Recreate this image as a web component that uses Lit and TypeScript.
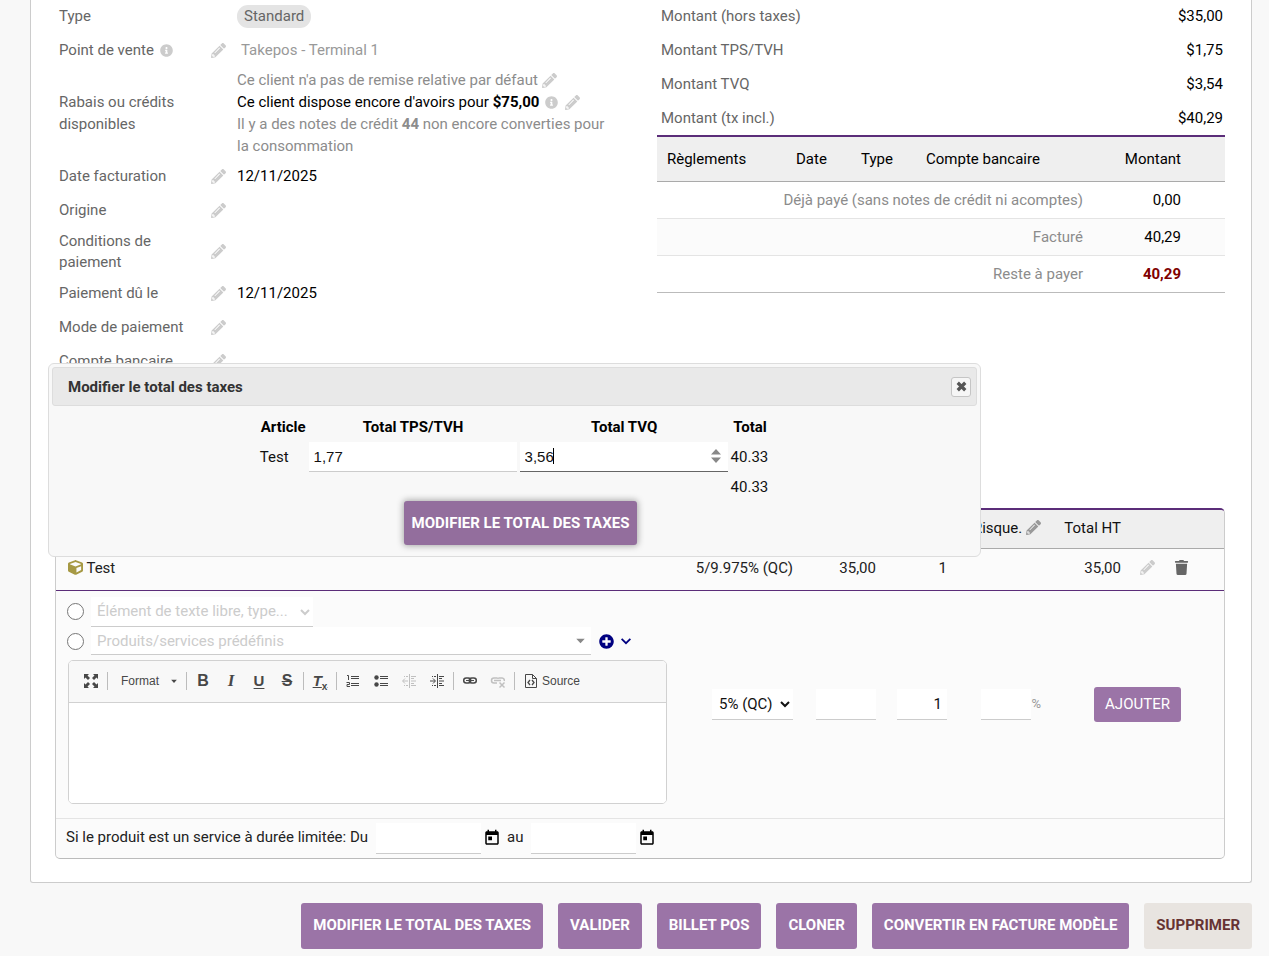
import { LitElement, html, svg, css, nothing } from "lit";
import { customElement, property } from "lit/decorators.js";

type Glyph = { box: string; body: unknown };

const stroke = (d: string, w = 1) =>
  svg`<path d=${d} fill="none" stroke="currentColor" stroke-width=${w} />`;
const fill = (d: string) => svg`<path d=${d} fill="currentColor" fill-rule="evenodd" />`;

const GLYPHS: Record<string, Glyph> = {
  pencil: {
    box: "0 0 512 512",
    body: fill(
      "M497.9 142.1l-46.1 46.1c-4.7 4.7-12.3 4.7-17 0l-111-111c-4.7-4.7-4.7-12.3 0-17l46.1-46.1c18.7-18.7 49.1-18.7 67.9 0l60.1 60.1c18.8 18.7 18.8 49.1 0 67.9zM284.2 99.8L21.6 362.4.4 483.9c-2.9 16.4 11.4 30.6 27.8 27.8l121.5-21.3 262.6-262.6c4.7-4.7 4.7-12.3 0-17l-111-111c-4.8-4.7-12.4-4.7-17.1 0zM124.1 339.9c-5.5-5.5-5.5-14.3 0-19.8l154-154c5.5-5.5 14.3-5.5 19.8 0s5.5 14.3 0 19.8l-154 154c-5.5 5.5-14.3 5.5-19.8 0zM88 424h48v36.3l-64.5 11.3-31.1-31.1L51.7 376H88v48z"
    ),
  },
  info: {
    box: "0 0 512 512",
    body: fill(
      "M256 8C119.043 8 8 119.083 8 256c0 136.997 111.043 248 248 248s248-111.003 248-248C504 119.083 392.957 8 256 8zm0 110c23.196 0 42 18.804 42 42s-18.804 42-42 42-42-18.804-42-42 18.804-42 42-42zm56 254c0 6.627-5.373 12-12 12h-88c-6.627 0-12-5.373-12-12v-24c0-6.627 5.373-12 12-12h12v-64h-12c-6.627 0-12-5.373-12-12v-24c0-6.627 5.373-12 12-12h64c6.627 0 12 5.373 12 12v100h12c6.627 0 12 5.373 12 12v24z"
    ),
  },
  trash: {
    box: "-32 0 512 512",
    body: fill(
      "M432 32H312l-9.4-18.7A24 24 0 0 0 281.1 0H166.8a23.72 23.72 0 0 0-21.4 13.3L136 32H16A16 16 0 0 0 0 48v32a16 16 0 0 0 16 16h416a16 16 0 0 0 16-16V48a16 16 0 0 0-16-16zM53.2 467a48 48 0 0 0 47.9 45h245.8a48 48 0 0 0 47.9-45L416 128H32z"
    ),
  },
  cube: {
    box: "0 0 512 512",
    body: fill(
      "M239.1 6.3l-208 78c-18.7 7-31.1 25-31.1 45v225.1c0 18.2 10.3 34.8 26.5 42.9l208 104c13.5 6.8 29.4 6.8 42.9 0l208-104c16.3-8.1 26.5-24.8 26.5-42.9V129.3c0-20-12.4-37.9-31.1-44.9l-208-78C262 2.2 250 2.2 239.1 6.3zM256 68.4l192 72v1.1l-192 78-192-78v-1.1l192-72zm32 356V275.5l160-65v133.9l-160 80z"
    ),
  },
  plus: {
    box: "0 0 512 512",
    body: fill(
      "M256 8C119 8 8 119 8 256s111 248 248 248 248-111 248-248S393 8 256 8zm144 276c0 6.6-5.4 12-12 12h-92v92c0 6.6-5.4 12-12 12h-56c-6.6 0-12-5.4-12-12v-92h-92c-6.6 0-12-5.4-12-12v-56c0-6.6 5.4-12 12-12h92v-92c0-6.6 5.4-12 12-12h56c6.6 0 12 5.4 12 12v92h92c6.6 0 12 5.4 12 12v56z"
    ),
  },
  calendar: {
    box: "0 0 24 24",
    body: fill(
      "M19 3h-1V1h-2v2H8V1H6v2H5c-1.11 0-1.99.9-1.99 2L3 19c0 1.1.89 2 2 2h14c1.1 0 2-.9 2-2V5c0-1.1-.9-2-2-2zm0 16H5V8h14v11zM7 10h5v5H7z"
    ),
  },
  chevron: { box: "0 0 16 16", body: stroke("M3 5.500L8 10.500l5-5", 2) },
  triangle: { box: "0 0 16 16", body: fill("M3.5 6h9L8 11z") },
  cross: { box: "0 0 16 16", body: stroke("M4 4l8 8M12 4l-8 8", 3.5) },
  spinner: { box: "0 0 16 16", body: fill("M3 6.500L8 1l5 5.500zM3 9.500h10L8 15z") },
  maximize: {
    box: "0 0 16 16",
    body: svg`${fill("M1 1h5L4.500 2.500 7 5 5 7 2.500 4.500 1 6zM15 1v5l-1.500-1.500L11 7 9 5l2.500-2.500L10 1zM1 15v-5l1.500 1.500L5 9l2 2-2.500 2.500L6 15zM15 15h-5l1.500-1.500L9 11l2-2 2.500 2.500L15 10z")}`,
  },
  ordered: {
    box: "0 0 16 16",
    body: svg`${stroke("M6 3.500h8M6 5.500h8M6 10.500h8M6 12.500h8")}${stroke("M2 2.500h1.500V7M1.500 9.500h3v2h-2.500v2h3")}`,
  },
  bullets: {
    box: "0 0 16 16",
    body: svg`${stroke("M7 3.500h8M7 5.500h8M7 10.500h8M7 12.500h8")}<circle cx="3.500" cy="4.500" r="2.200" fill="currentColor" /><circle cx="3.500" cy="11.500" r="2.200" fill="currentColor" />`,
  },
  outdent: {
    box: "0 0 16 16",
    body: svg`${stroke("M8.500 1v14M10 3.500h5M10 5.500h3M10 8h5M10 10.500h3M10 12.500h5")}${stroke("M3 3.500h1M5 3.500h2M3 12.500h1M5 12.500h2M2 8h5M4 5.500L1.500 8 4 10.500")}`,
  },
  indent: {
    box: "0 0 16 16",
    body: svg`${stroke("M8.500 1v14M10 3.500h5M10 5.500h3M10 8h5M10 10.500h3M10 12.500h5")}${stroke("M3 3.500h1M5 3.500h2M3 12.500h1M5 12.500h2M1 8h5M4 5.500L6.500 8 4 10.500")}`,
  },
  link: {
    box: "0 0 16 16",
    body: svg`<rect x="1.700" y="5" width="7" height="5" rx="2.500" fill="none" stroke="currentColor" stroke-width="1.500" /><rect x="7.300" y="5" width="7" height="5" rx="2.500" fill="none" stroke="currentColor" stroke-width="1.500" />${stroke("M4 7.500h8", 1.2)}`,
  },
  unlink: {
    box: "0 0 16 16",
    body: svg`${stroke("M8 5.500A2 2 0 0 0 6.500 5H4a2.500 2.500 0 0 0 0 5h3M8 5.500A2 2 0 0 1 9.500 5h2.700a2.300 2.300 0 0 1 2 3M4 7.500h7", 1.5)}${stroke("M9.500 9.500l5 5M14.500 9.500l-5 5", 1.5)}`,
  },
  source: {
    box: "0 0 16 16",
    body: svg`${stroke("M2.500 1.500h7l4 4v9h-11zM9.500 1.500v4h4")}${stroke("M7 7L5 9.500 7 12M9 7l2 2.500L9 12", 1.3)}`,
  },
};

@customElement("app-icon")
export class AppIcon extends LitElement {
  static styles = css`
    :host { display: inline-flex; width: 15px; height: 15px; vertical-align: middle; }
    svg { width: 100%; height: 100%; display: block; }
  `;
  @property() name = "pencil";
  render() {
    const g = GLYPHS[this.name];
    return html`<svg viewBox=${g.box} aria-hidden="true">${g.body}</svg>`;
  }
}

@customElement("invoice-summary")
export class InvoiceSummary extends LitElement {
  static styles = css`
    :host { display: grid; grid-template-columns: 1fr 1fr; column-gap: 34px; align-items: start; }
    a { color: inherit; text-decoration: none; }
    table { width: 100%; border-collapse: collapse; border-spacing: 0; table-layout: fixed; }
    td, th { font-weight: 400; padding: 0; text-align: left; }
    .facts tr { height: 34px; }
    .facts tr.first { height: 33px; }
    .facts tr.first th, .facts tr.first td { padding-bottom: 2px; }
    .facts tr.two-lines { height: 49px; line-height: 21px; }
    .facts tr.four-lines { height: 92px; }
    .facts th { color: #666; padding-left: 4px; }
    .facts td { padding-left: 7px; padding-right: 8px; }
    .facts td.action { padding: 0; text-align: center; }
    .facts td.amount { text-align: right; padding-right: 2px; }
    .label-col { width: 152px; }
    .action-col { width: 23px; }
    .edit { color: #ccc; }
    .edit app-icon { display: flex; margin: 0 auto; }
    td div .edit app-icon, .hint { display: inline-flex; margin-bottom: 2px; }
    .hint { width: 13px; height: 13px; color: #ccc; margin: 0 3px 2px 2px; }
    .badge { background: #e4e4e4; color: #666; border-radius: 11px; padding: 2px 7px 3px; }
    .muted { color: #8c8c8c; }
    .terminal { color: #999; padding-left: 4px; }
    .payments { border-top: 2px solid #5b2d79; border-bottom: 1px solid #bbb; }
    .payments thead tr { background: #efefef; height: 45px; border-bottom: 1px solid #aaa; }
    .payments th, .payments td { padding: 0 10px; white-space: nowrap; }
    .payments tbody tr { height: 37px; }
    .payments tbody tr + tr { border-top: 1px solid #e4e4e4; }
    .payments tbody tr:nth-child(2) { background: #fbfbfb; }
    .payments .num { text-align: right; }
    .payments tbody th { text-align: right; color: #8c8c8c; }
    .due { color: #800000; font-weight: 700; }
    .c-name { width: 129px; }
    .c-short { width: 65px; }
    .c-amount { width: 98px; }
    .c-end { width: 34px; }
  `;

  private edit(label: string) {
    return html`<a class="edit" href="#" aria-label=${"Modifier " + label}><app-icon name="pencil"></app-icon></a>`;
  }

  private row(label: string, value: unknown = nothing, cls = "") {
    return html`<tr class=${cls}>
      <th scope="row">${label}</th>
      <td class="action">${this.edit(label)}</td>
      <td>${value}</td>
    </tr>`;
  }

  render() {
    const amounts = [
      ["Montant (hors taxes)", "$35,00"],
      ["Montant TPS/TVH", "$1,75"],
      ["Montant TVQ", "$3,54"],
      ["Montant (tx incl.)", "$40,29"],
    ];
    return html`
      <table class="facts">
        <colgroup><col class="label-col" /><col class="action-col" /><col /></colgroup>
        <tbody>
          <tr class="first">
            <th scope="row">Type</th><td></td>
            <td><span class="badge">Standard</span></td>
          </tr>
          <tr>
            <th scope="row">Point de vente <app-icon class="hint" name="info"></app-icon></th>
            <td class="action">${this.edit("Point de vente")}</td>
            <td><span class="terminal">Takepos - Terminal 1</span></td>
          </tr>
          <tr class="four-lines">
            <th scope="row">Rabais ou crédits disponibles</th><td></td>
            <td>
              <div class="muted">Ce client n'a pas de remise relative par défaut ${this.edit("remise")}</div>
              <div>Ce client dispose encore d'avoirs pour <b>$75,00</b> <app-icon class="hint" name="info"></app-icon> ${this.edit("avoirs")}</div>
              <div class="muted">Il y a des notes de crédit <b>44</b> non encore converties pour la consommation</div>
            </td>
          </tr>
          ${this.row("Date facturation", "12/11/2025")}
          ${this.row("Origine")}
          ${this.row("Conditions de paiement", nothing, "two-lines")}
          ${this.row("Paiement dû le", "12/11/2025")}
          ${this.row("Mode de paiement")}
          ${this.row("Compte bancaire")}
        </tbody>
      </table>
      <div>
        <table class="facts">
          <tbody>
            ${amounts.map(
              ([k, v], i) => html`<tr class=${i ? "" : "first"}><th scope="row">${k}</th><td class="amount">${v}</td></tr>`
            )}
          </tbody>
        </table>
        <table class="payments">
          <colgroup>
            <col class="c-name" /><col class="c-short" /><col class="c-short" /><col /><col class="c-amount" /><col class="c-end" />
          </colgroup>
          <thead>
            <tr>
              <th scope="col">Règlements</th><th scope="col">Date</th><th scope="col">Type</th>
              <th scope="col">Compte bancaire</th><th scope="col" class="num">Montant</th><td></td>
            </tr>
          </thead>
          <tbody>
            <tr><th scope="row" colspan="4">Déjà payé (sans notes de crédit ni acomptes)</th><td class="num">0,00</td><td></td></tr>
            <tr><th scope="row" colspan="4">Facturé</th><td class="num">40,29</td><td></td></tr>
            <tr><th scope="row" colspan="4">Reste à payer</th><td class="num due">40,29</td><td></td></tr>
          </tbody>
        </table>
      </div>
    `;
  }
}

@customElement("rich-editor")
export class RichEditor extends LitElement {
  static styles = css`
    :host { display: block; border: 1px solid #d1d1d1; border-radius: 5px; overflow: hidden; background: #fff;
      font-family: "Liberation Sans", Arial, sans-serif; font-size: 12px; line-height: 16px; color: #484848; }
    .toolbar { display: flex; align-items: center; height: 41px; padding: 0 8px; background: #f8f8f8; border-bottom: 1px solid #d1d1d1; }
    button { display: inline-flex; align-items: center; justify-content: center; gap: 3px; width: 28px; height: 28px;
      padding: 0; border: 0; background: none; color: inherit; font: inherit; }
    button[disabled] { color: #c0c0c0; }
    button app-icon { width: 16px; height: 16px; }
    .sep { width: 1px; height: 18px; margin: 0 2px; background: #bcbcbc; }
    .combo { width: 74px; justify-content: flex-start; padding-left: 11px; gap: 10px; }
    .combo app-icon { width: 10px; height: 10px; }
    .source { width: auto; padding: 0 6px; }
    .letter { font-size: 16px; font-weight: 700; }
    .italic { font-family: "Liberation Serif", serif; font-style: italic; font-size: 17px; }
    .underline { text-decoration: underline; font-size: 15px; text-underline-offset: 2px; }
    .strike { text-decoration: line-through; }
    .clear { font-size: 15px; font-style: italic; text-decoration: underline; }
    .clear sub { font-size: 10px; font-style: normal; line-height: 0; }
    textarea { display: block; box-sizing: border-box; width: 100%; height: 100px; border: 0; resize: none; outline: 0; background: #fff; }
  `;

  private icon(name: string, label: string, disabled = false) {
    return html`<button type="button" aria-label=${label} ?disabled=${disabled}><app-icon name=${name}></app-icon></button>`;
  }

  render() {
    const sep = html`<span class="sep"></span>`;
    return html`
      <div class="toolbar" role="toolbar">
        ${this.icon("maximize", "Agrandir")}${sep}
        <button type="button" class="combo">Format <app-icon name="triangle"></app-icon></button>${sep}
        <button type="button" class="letter">B</button>
        <button type="button" class="letter italic">I</button>
        <button type="button" class="letter underline">U</button>
        <button type="button" class="letter strike">S</button>${sep}
        <button type="button"><span class="letter clear">T<sub>x</sub></span></button>${sep}
        ${this.icon("ordered", "Liste numérotée")}${this.icon("bullets", "Liste à puces")}
        ${this.icon("outdent", "Diminuer le retrait", true)}${this.icon("indent", "Augmenter le retrait")}${sep}
        ${this.icon("link", "Lien")}${this.icon("unlink", "Supprimer le lien", true)}${sep}
        <button type="button" class="source"><app-icon name="source"></app-icon>Source</button>
      </div>
      <textarea aria-label="Description"></textarea>
    `;
  }
}

@customElement("invoice-lines")
export class InvoiceLines extends LitElement {
  static styles = css`
    :host { display: block; border: 1px solid #ccc; border-top: 2px solid #5b2d79; border-bottom-color: #bbb;
      border-radius: 5px; overflow: hidden; background: #fbfbfb; color: #222; }
    a { color: inherit; text-decoration: none; }
    table { width: 100%; border-collapse: collapse; table-layout: fixed; }
    th, td { padding: 0 10px; font-weight: 400; text-align: right; white-space: nowrap; }
    .head { height: 38px; background: #efefef; border-bottom: 1px solid #aaa; color: #111; }
    .head th { padding-bottom: 2px; }
    .item { height: 42px; border-bottom: 1px solid #5b2d79; }
    .item td { padding-bottom: 3px; }
    .item .desc { text-align: left; padding-left: 12px; }
    .item .icon { padding-left: 0; padding-right: 0; text-align: left; }
    .item .icon app-icon, .desc app-icon, .head app-icon { margin-bottom: 2px; }
    .item .icon { padding-left: 9px; }
    .c-vat { width: 122px; } .c-price { width: 83px; } .c-qty { width: 71px; } .c-disc { width: 94px; }
    .c-total { width: 80px; } .c-icon { width: 34px; } .c-end { width: 25px; }
    .cube { color: #a69944; }
    .grey { color: #999; } .light { color: #ccc; } .dark { color: #666; }
    .form td { vertical-align: middle; }
    .form .editor-cell { padding: 6px 14px 14px 12px; text-align: left; white-space: normal; }
    .form .submit { text-align: center; }
    .choice { display: flex; align-items: center; height: 30px; }
    .choice.second { height: 29px; margin-bottom: 4px; }
    .choice input { width: 17px; height: 17px; margin: 0 7px 0 -1px; }
    select, .field { box-sizing: border-box; height: 31px; border: 0; border-bottom: 1px solid #ccc; border-radius: 0;
      background-color: #fff; font: inherit; color: #111; outline: 0; padding: 0 5px; }
    .choice select { height: 30px; width: 222px; color: #ccc; padding: 0 0 0 2px; }
    .combo { position: relative; width: 500px; display: flex; color: #888; margin-right: 8px; }
    .choice .combo select { flex: 1; width: 100%; height: 28px; appearance: none; padding: 0 24px 0 6px; }
    .combo app-icon { position: absolute; right: 3px; top: 6px; pointer-events: none; }
    .navy { color: #000080; display: inline-flex; gap: 5px; align-items: center; }
    .navy app-icon + app-icon { width: 14px; height: 14px; }
    .rate { width: 81px; padding: 0 0 0 3px; }
    .price { width: 60px; } .short { width: 50px; text-align: right; }
    .percent { color: #999; display: inline-flex; align-items: center; font-size: 13px; }
    .add { height: 35px; border: 0; border-radius: 3px; background: #9b74a7; color: #fff; font: inherit; padding: 0 11px; }
    .period { display: flex; align-items: center; height: 40px; box-sizing: border-box; border-top: 1px solid #e4e4e4; padding: 0 10px; }
    .period label { padding-bottom: 3px; margin-right: 4px; }
    .period .field { width: 105px; margin: 0 2px 0 4px; }
    .period .cal { border: 0; background: none; padding: 0; width: 18px; height: 18px; margin-right: 6px; color: #000; }
    .cal app-icon { width: 18px; height: 18px; display: flex; }
  `;

  render() {
    return html`
      <table>
        <colgroup>
          <col /><col class="c-vat" /><col class="c-price" /><col class="c-qty" /><col class="c-disc" />
          <col class="c-total" /><col class="c-icon" /><col class="c-icon" /><col class="c-end" />
        </colgroup>
        <thead>
          <tr class="head">
            <td></td><td></td><td></td><td></td>
            <th scope="col">Risque. <a class="grey" href="#" aria-label="Modifier"><app-icon name="pencil"></app-icon></a></th>
            <th scope="col">Total HT</th><td></td><td></td><td></td>
          </tr>
        </thead>
        <tbody>
          <tr class="item">
            <td class="desc"><app-icon class="cube" name="cube"></app-icon> Test</td>
            <td>5/9.975% (QC)</td><td>35,00</td><td>1</td><td></td><td>35,00</td>
            <td class="icon"><a class="light" href="#" aria-label="Modifier la ligne"><app-icon name="pencil"></app-icon></a></td>
            <td class="icon"><a class="dark" href="#" aria-label="Supprimer la ligne"><app-icon name="trash"></app-icon></a></td>
            <td></td>
          </tr>
          <tr class="form">
            <td class="editor-cell">
              <div class="choice">
                <input type="radio" name="kind" aria-label="Texte libre" />
                <select aria-label="Type d'élément"><option>Élément de texte libre, type...</option></select>
              </div>
              <div class="choice second">
                <input type="radio" name="kind" aria-label="Prédéfini" />
                <span class="combo">
                  <select aria-label="Produit"><option>Produits/services prédéfinis</option></select>
                  <app-icon name="triangle"></app-icon>
                </span>
                <a class="navy" href="#" aria-label="Créer"><app-icon name="plus"></app-icon><app-icon name="chevron"></app-icon></a>
              </div>
              <rich-editor></rich-editor>
            </td>
            <td><select class="rate" aria-label="Taux"><option>5% (QC)</option></select></td>
            <td><input class="field price" aria-label="Prix unitaire" /></td>
            <td><input class="field short" value="1" aria-label="Quantité" /></td>
            <td><label class="percent"><input class="field short" aria-label="Remise" />%</label></td>
            <td class="submit" colspan="4"><button type="button" class="add">AJOUTER</button></td>
          </tr>
        </tbody>
      </table>
      <div class="period">
        <label for="from">Si le produit est un service à durée limitée: Du</label>
        <input class="field" id="from" />
        <button type="button" class="cal" aria-label="Date de début"><app-icon name="calendar"></app-icon></button>
        <label for="to">au</label>
        <input class="field" id="to" />
        <button type="button" class="cal" aria-label="Date de fin"><app-icon name="calendar"></app-icon></button>
      </div>
    `;
  }
}

@customElement("tax-dialog")
export class TaxDialog extends LitElement {
  static styles = css`
    :host { display: block; box-sizing: border-box; border: 1px solid #ddd; border-radius: 6px; background: #f8f8f8; padding: 3px 3px 11px; }
    .title { display: flex; align-items: center; justify-content: space-between; box-sizing: border-box; height: 39px;
      padding: 0 5px 0 15px; background: #e9e9e9; border: 1px solid #ddd; border-radius: 3px; }
    h2 { margin: 0; font-size: 15px; line-height: 22px; color: #333; }
    .close { display: flex; align-items: center; justify-content: center; width: 20px; height: 20px; padding: 0;
      border: 1px solid #c5c5c5; border-radius: 3px; background: #f6f6f6; color: #555; }
    table { margin: 6px auto 0; border-collapse: collapse; color: #111; }
    th, td { padding: 0 2px; height: 30px; }
    th { color: #000; }
    td { padding-left: 1px; }
    .sum td { height: 29px; }
    .name { padding-right: 3px; }
    .field { position: relative; display: flex; }
    input { box-sizing: border-box; width: 208px; height: 30px; border: 0; border-bottom: 1px solid #ccc; background: #fff;
      padding: 0 5px; outline: 0; color: #111; font: 15px "Liberation Sans", Arial, sans-serif; }
    .active input { border-bottom-color: #666; }
    .caret { position: absolute; left: 33px; top: 6px; width: 1px; height: 16px; background: #000; }
    .field app-icon { position: absolute; right: 4px; top: 6px; width: 16px; height: 16px; color: #888; }
    .actions { display: flex; justify-content: center; padding-left: 12px; }
    .save { height: 44px; padding: 0 8px; border: 0; border-radius: 3px; background: #936e9d; color: #fff; font: inherit;
      font-weight: 700; box-shadow: 0 0 6px 1px rgba(50, 50, 50, 0.4); }
  `;

  render() {
    return html`
      <div class="title">
        <h2>Modifier le total des taxes</h2>
        <button type="button" class="close" aria-label="Fermer"><app-icon name="cross"></app-icon></button>
      </div>
      <table>
        <thead>
          <tr><th scope="col">Article</th><th scope="col">Total TPS/TVH</th><th scope="col">Total TVQ</th><th scope="col">Total</th></tr>
        </thead>
        <tbody>
          <tr>
            <td class="name">Test</td>
            <td><div class="field"><input inputmode="decimal" value="1,77" aria-label="Total TPS/TVH" /></div></td>
            <td>
              <div class="field active">
                <input inputmode="decimal" value="3,56" aria-label="Total TVQ" />
                <span class="caret"></span><app-icon name="spinner"></app-icon>
              </div>
            </td>
            <td>40.33</td>
          </tr>
          <tr class="sum"><td></td><td></td><td></td><td>40.33</td></tr>
        </tbody>
      </table>
      <div class="actions"><button type="button" class="save">MODIFIER LE TOTAL DES TAXES</button></div>
    `;
  }
}

@customElement("app-root")
export class AppRoot extends LitElement {
  static styles = css`
    :host { display: block; position: relative; box-sizing: border-box; min-height: 100vh; background: #f8f8f8; padding: 0 17px 7px 30px;
      font-family: Roboto, "Liberation Sans", sans-serif; font-size: 15px; line-height: 22px; color: #000; }
    .card { background: #fff; border: 1px solid #ccc; border-top: 0; border-radius: 0 0 3px 3px; padding: 0 26px 23px 24px; }
    .summary { margin-bottom: 130px; }
    .dialog { position: absolute; left: 48px; top: 363px; width: 933px; }
    .actions { display: flex; justify-content: flex-end; gap: 15px; margin-top: 20px; }
    .action { height: 46px; padding: 0 12px 2px; border: 0; border-radius: 3px; background: #9b74a7; color: #fff;
      font: inherit; font-weight: 700; white-space: nowrap; }
    .danger { background: #e8e4e0; color: #633; }
  `;

  render() {
    const actions = ["MODIFIER LE TOTAL DES TAXES", "VALIDER", "BILLET POS", "CLONER", "CONVERTIR EN FACTURE MODÈLE"];
    return html`
      <main class="card">
        <invoice-summary class="summary"></invoice-summary>
        <invoice-lines></invoice-lines>
      </main>
      <div class="actions">
        ${actions.map((a) => html`<button type="button" class="action">${a}</button>`)}
        <button type="button" class="action danger">SUPPRIMER</button>
      </div>
      <tax-dialog class="dialog" role="dialog" aria-label="Modifier le total des taxes"></tax-dialog>
    `;
  }
}
